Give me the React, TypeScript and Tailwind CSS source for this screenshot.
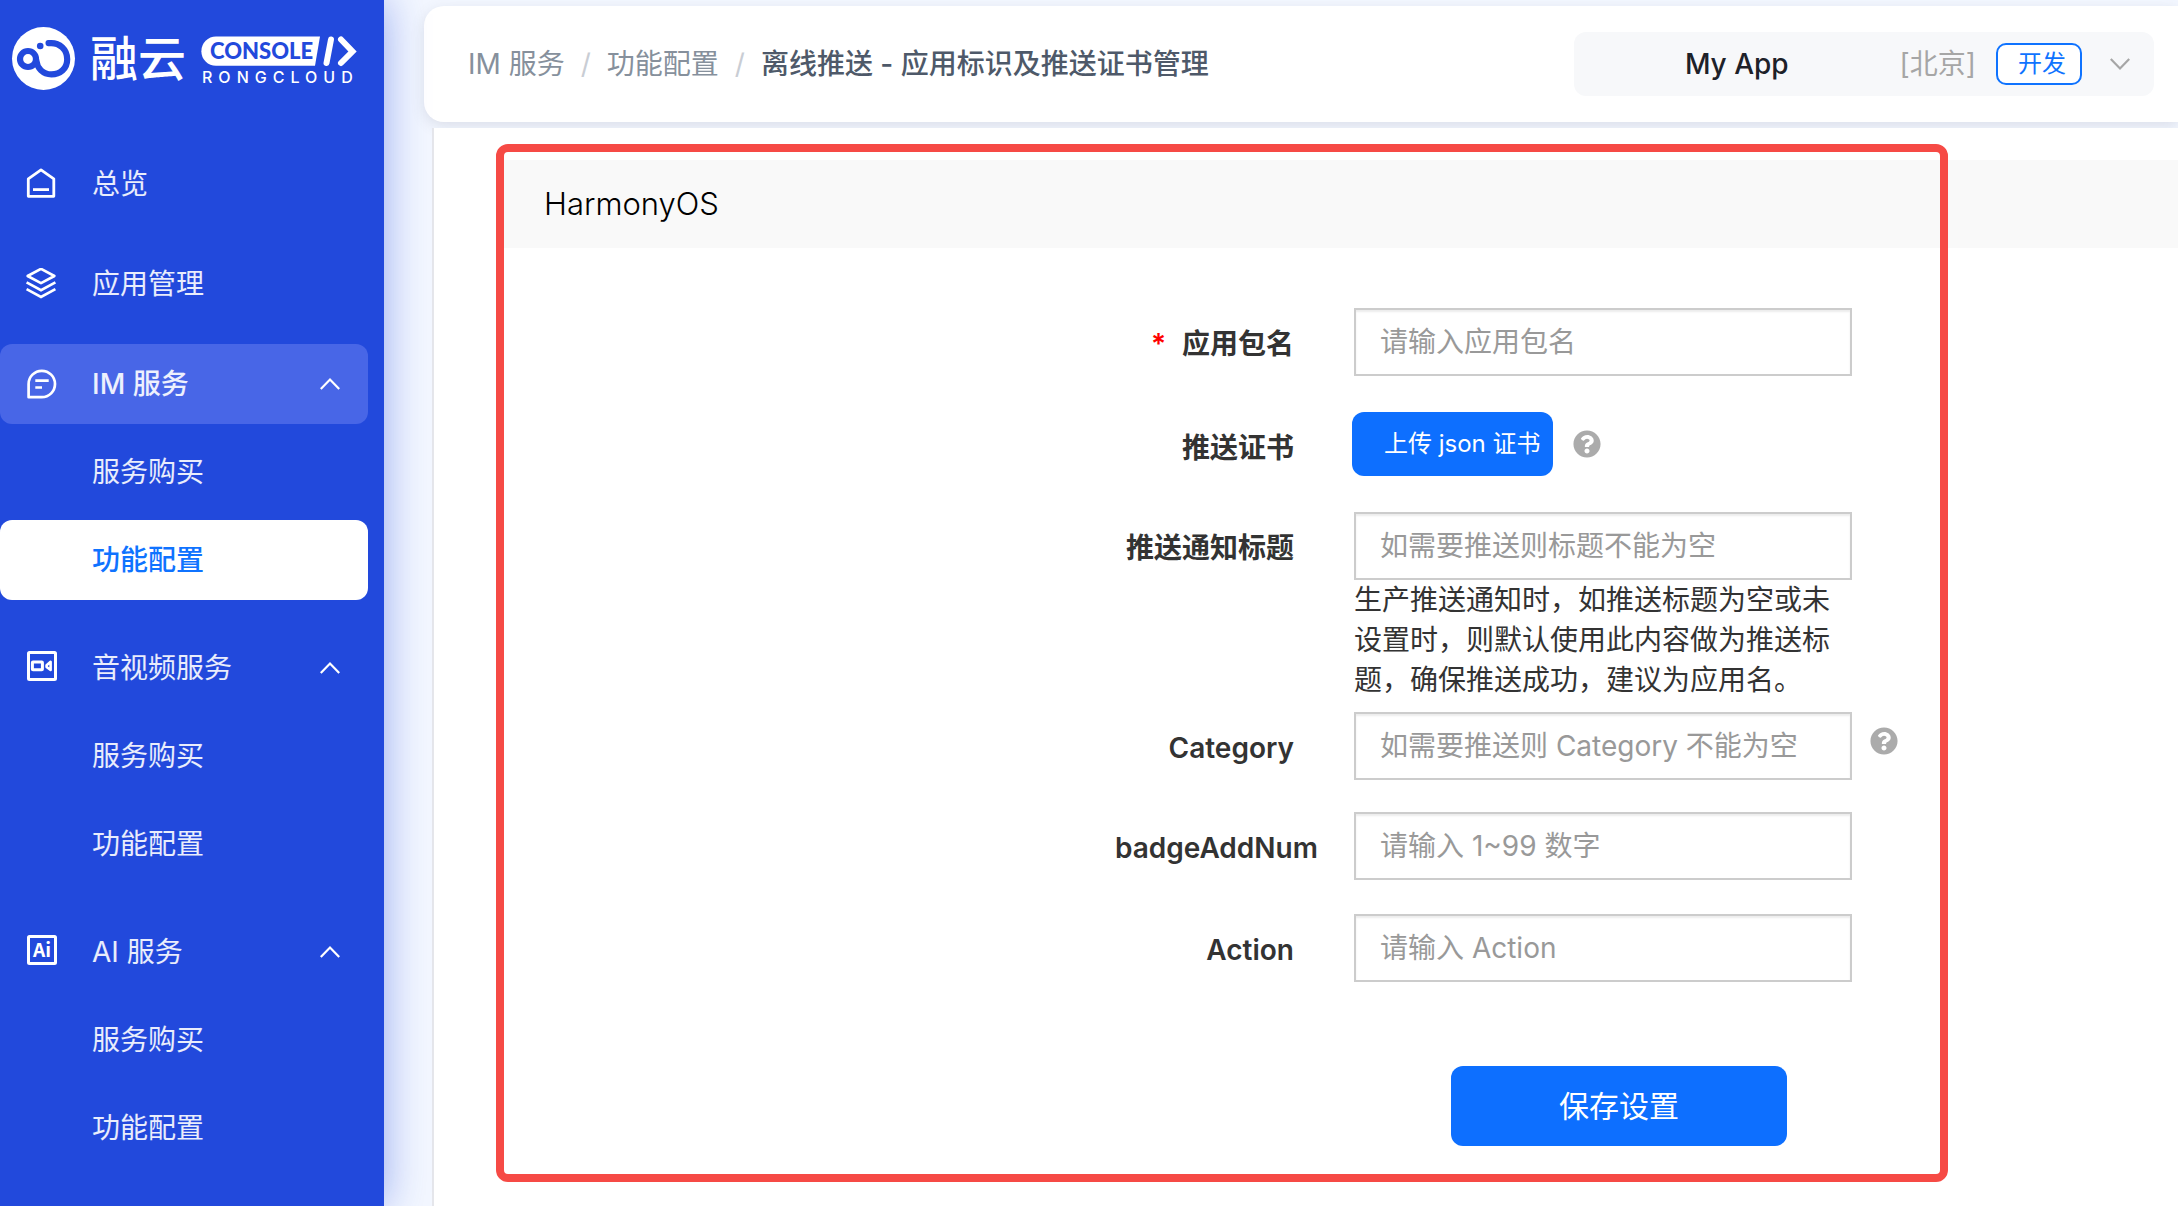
import React from 'react';
import { FaQuestionCircle } from 'react-icons/fa';

interface MenuGroup {
  label: string;
  icon: React.ReactNode;
  active?: boolean;
  children?: { label: string; active?: boolean }[];
}

const HomeIcon = () => (
  <svg viewBox="0 0 32 32" className="w-8 h-8" fill="none" stroke="currentColor" strokeWidth="2.8">
    <path d="M16 1.9 28.8 10.8V28.3H3.3V10.8Z" strokeLinejoin="round" />
    <path d="M8 21.6H24" />
  </svg>
);

const LayersIcon = () => (
  <svg viewBox="0 0 32 32" className="w-8 h-8" fill="none" stroke="currentColor" strokeWidth="2.6">
    <path d="M16 .8 29.4 8 16 15.2 2.6 8Z" strokeLinejoin="round" />
    <path d="M1.6 14.4 16 22.2 30.4 14.4M1.6 21.2 16 29 30.4 21.2" />
  </svg>
);

const ChatIcon = () => (
  <svg viewBox="0 0 32 32" className="w-8 h-8" fill="none" stroke="currentColor" strokeWidth="2.7">
    <path d="M3.6 29.2V16A13.2 13.2 0 1 1 16.8 29.2Z" strokeLinejoin="round" />
    <path d="M10.3 12.7H23.7M10.3 19.5H17" />
  </svg>
);

const VideoIcon = () => (
  <svg viewBox="0 0 32 32" className="w-8 h-8 overflow-visible" fill="none" stroke="currentColor" strokeWidth="3">
    <rect x="3.5" y=".5" width="27" height="27" rx="1" />
    <rect x="7.4" y="10" width="10" height="7.8" rx=".6" />
    <path d="M21.6 13.2 25.6 9.8V18L21.6 15Z" strokeWidth="2.6" strokeLinejoin="round" />
  </svg>
);

const AiIcon = () => (
  <svg viewBox="0 0 32 32" className="w-8 h-8 overflow-visible" fill="none">
    <rect x="3.5" y=".5" width="27" height="27" rx="1" stroke="currentColor" strokeWidth="3" />
    <text x="17" y="21.4" textAnchor="middle" fill="currentColor" fontSize="19" fontWeight="700" fontFamily="'Noto Sans CJK SC', sans-serif">Ai</text>
  </svg>
);

const Chevron = ({ className }: { className?: string }) => (
  <svg viewBox="0 0 20 12" className={className} fill="none" stroke="currentColor" strokeWidth="2.2">
    <path d="M.8 11 10 1.6 19.2 11" />
  </svg>
);

const Logo = () => (
  <svg viewBox="0 0 356 66" className="w-[356px] h-[66px] overflow-visible" role="img" aria-label="融云 RongCloud Console">
    <circle cx="31.5" cy="31.5" r="31.5" fill="#fff" />
    <circle cx="16" cy="32" r="8" fill="none" stroke="#2249dc" strokeWidth="6.2" />
    <circle cx="28.2" cy="19" r="3.3" fill="#2249dc" />
    <path d="M36.6 16.2C48 14.8 55.2 23 55.2 32.2 55.2 41.8 48 47.4 39.4 47.4 31 47.4 25.2 41.5 24.2 33" fill="none" stroke="#2249dc" strokeWidth="6.2" strokeLinecap="round" />
    <text x="78" y="48.5" fill="#fff" fontSize="48" fontWeight="500" fontFamily="'Noto Sans CJK SC', sans-serif">融云</text>
    <path d="M204 9.5H308L303 38.8H204A14.6 14.6 0 0 1 204 9.5Z" fill="#fff" />
    <text x="198" y="32" fill="#2249dc" fontSize="22" fontWeight="900" fontFamily="Lato, sans-serif">CONSOLE</text>
    <path d="M319 12.5 314.5 36M329 12.5 340.5 24.5 329 36" fill="none" stroke="#fff" strokeWidth="6" strokeLinecap="round" />
    <text x="190" y="55.5" fill="#fff" fontSize="16" fontWeight="500" fontFamily="Inter, sans-serif" className="tracking-[6px]">RONGCLOUD</text>
  </svg>
);

const menu: MenuGroup[] = [
  { label: '总览', icon: <HomeIcon /> },
  { label: '应用管理', icon: <LayersIcon /> },
  {
    label: 'IM 服务',
    icon: <ChatIcon />,
    active: true,
    children: [{ label: '服务购买' }, { label: '功能配置', active: true }],
  },
  {
    label: '音视频服务',
    icon: <VideoIcon />,
    children: [{ label: '服务购买' }, { label: '功能配置' }],
  },
  {
    label: 'AI 服务',
    icon: <AiIcon />,
    children: [{ label: '服务购买' }, { label: '功能配置' }],
  },
];

const Sidebar = () => (
  <aside className="relative z-10 w-96 shrink-0 bg-[#2249dc] pr-4 text-white shadow-[0_0_40px_rgba(34,73,220,0.45)]">
    <div className="pl-3 pt-[27px] pb-[51px]">
      <Logo />
    </div>
    <nav>
      {menu.map((group) => (
        <div key={group.label} className={group.children ? 'mb-7' : 'mb-5'}>
          <button
            type="button"
            className={`flex h-20 w-full items-center rounded-xl pl-[25px] pr-7 text-[28px] ${group.active ? 'bg-[#4866e7] font-medium' : ''}`}
          >
            {group.icon}
            <span className="ml-[35px] flex-1 text-left text-white/90">{group.label}</span>
            {group.children && <Chevron className="w-5 h-3" />}
          </button>
          {group.children?.map((item) => (
            <a
              key={item.label}
              href="#"
              className={`mt-2 flex h-20 items-center rounded-xl pl-[92px] text-[28px] ${item.active ? 'bg-white font-medium text-[#0f73ff]' : 'text-white/90'}`}
            >
              {item.label}
            </a>
          ))}
        </div>
      ))}
    </nav>
  </aside>
);

const Header = () => (
  <header className="ml-10 mt-1.5 flex h-[116px] items-center justify-between rounded-l-[20px] bg-white pl-11 pr-6 shadow-[0_4px_14px_rgba(78,89,105,0.15)]">
    <nav className="flex items-center gap-4 text-[28px] text-[#86909c]">
      <a href="#">IM 服务</a>
      <span className="text-[#c9cdd4]">/</span>
      <a href="#">功能配置</a>
      <span className="text-[#c9cdd4]">/</span>
      <span className="font-medium text-[#4e5969]">离线推送 - 应用标识及推送证书管理</span>
    </nav>
    <button type="button" className="flex h-16 w-[580px] items-center rounded-xl bg-[#f7f8fa] pr-6 text-[28px]">
      <span className="flex-1 text-center font-medium text-[#1d2129]">My App</span>
      <span className="mr-5 text-[#a6a6a6]">[北京]</span>
      <span className="mr-7 flex h-[42px] items-center rounded-[10px] border-2 border-[#0f73ff] bg-white pl-5 pr-3.5 text-2xl text-[#0f73ff]">开发</span>
      <Chevron className="w-5 h-3 rotate-180 text-[#a6a6a6]" />
    </button>
  </header>
);

interface FieldRowProps {
  id: string;
  label: string;
  placeholder?: string;
  required?: boolean;
  hint?: string;
  help?: boolean;
  className?: string;
  children?: React.ReactNode;
}

const HelpButton = ({ className }: { className?: string }) => (
  <button type="button" aria-label="帮助" className={className}>
    <FaQuestionCircle size={28} color="#ababab" />
  </button>
);

const FieldRow = ({ id, label, placeholder, required, hint, help, className, children }: FieldRowProps) => (
  <div className={`flex items-start ${className ?? ''}`}>
    <label htmlFor={id} className="w-[179px] shrink-0 whitespace-nowrap pt-4 text-right text-[28px] leading-10 font-semibold text-[#333]">
      {required && <span className="mr-4 text-[#f00]">*</span>}
      {label}
    </label>
    <div className="ml-15 w-[498px]">
      {children ?? (
        <input
          id={id}
          type="text"
          placeholder={placeholder}
          className="h-[68px] w-full border-2 border-[#ccc] px-6 text-[28px] shadow-[inset_0_2px_2px_rgba(0,0,0,0.075)] outline-none placeholder:text-[#999]"
        />
      )}
      {hint && <p className="text-[28px] leading-10 text-[#333]">{hint}</p>}
    </div>
    {help && <HelpButton className="ml-[18px] mt-[15px]" />}
  </div>
);

const App: React.FC = () => {
  return (
    <div
      lang="zh-CN"
      className="flex min-h-screen overflow-hidden bg-[#f3f7ff] font-['Inter','Noto_Sans_CJK_SC',sans-serif]"
    >
      <Sidebar />

      <div className="flex min-w-0 flex-1 flex-col">
        <Header />

        <main className="relative mt-1.5 ml-12 flex-1 border-l-2 border-[#e5e6eb] bg-white pt-8 pl-[70px]">
          <section className="relative">
            <h2 className="flex h-22 items-center bg-[#f9f9f9] pl-10 text-[31px] font-light text-black">HarmonyOS</h2>

            <form className="ml-[36.5%] pt-[60px]">
              <FieldRow id="package" label="应用包名" placeholder="请输入应用包名" required className="mb-9" />
              <FieldRow id="cert" label="推送证书" className="mb-9">
                <div className="-ml-0.5 flex items-center gap-5">
                  <button id="cert" type="button" className="h-16 rounded-xl bg-[#0d6fff] pl-8 pr-3 text-2xl text-white">
                    上传 json 证书
                  </button>
                  <HelpButton />
                </div>
              </FieldRow>
              <FieldRow
                id="title"
                label="推送通知标题"
                placeholder="如需要推送则标题不能为空"
                hint="生产推送通知时，如推送标题为空或未设置时，则默认使用此内容做为推送标题，确保推送成功，建议为应用名。"
                className="mb-3"
              />
              <FieldRow id="category" label="Category" placeholder="如需要推送则 Category 不能为空" help className="mb-8" />
              <FieldRow id="badge" label="badgeAddNum" placeholder="请输入 1~99 数字" className="mb-[34px]" />
              <FieldRow id="action" label="Action" placeholder="请输入 Action" />
              <button type="submit" className="mt-21 ml-[336px] block h-20 w-84 rounded-xl bg-[#0d6fff] text-[30px] text-white">
                保存设置
              </button>
            </form>

            {/* Highlight frame around the HarmonyOS block */}
            <div className="pointer-events-none absolute -top-4 right-[230px] -bottom-9 -left-2 rounded-xl border-8 border-[#f64a45]" />
          </section>
        </main>
      </div>
    </div>
  );
};

export default App;
